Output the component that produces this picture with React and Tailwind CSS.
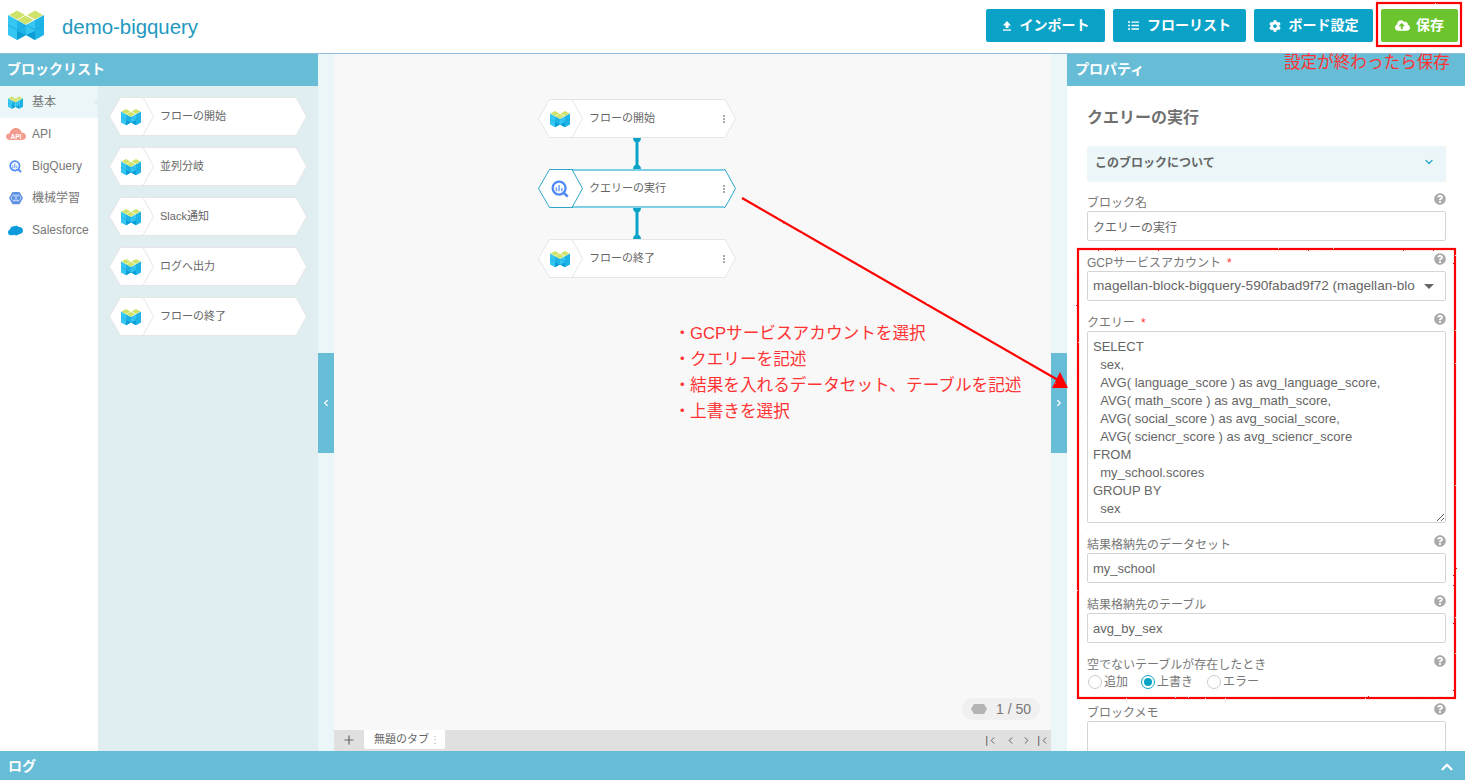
import { FaCog, FaCloudUploadAlt, FaListUl, FaQuestionCircle } from 'react-icons/fa'
import { ChevronDown, ChevronUp, ChevronLeft, ChevronRight, Plus } from 'lucide-react'

const query = `SELECT
  sex,
  AVG( language_score ) as avg_language_score,
  AVG( math_score ) as avg_math_score,
  AVG( social_score ) as avg_social_score,
  AVG( sciencr_score ) as avg_sciencr_score
FROM
  my_school.scores
GROUP BY
  sex`

function Logo({ className }) {
  return (
    <svg viewBox="0 0 36 30" className={className}>
      <polygon points="0,5 9,10 9,30 0,25" fill="#35c6f2" />
      <polygon points="9,10 18,15 18,25 9,30" fill="#1fb4e8" />
      <polygon points="18,15 27,10 27,30 18,25" fill="#35c6f2" />
      <polygon points="27,10 36,5 36,25 27,30" fill="#1fb4e8" />
      <polygon points="9,21 18,25 9,30" fill="#0a9dd6" />
      <polygon points="27,21 18,25 27,30" fill="#0a9dd6" />
      <path d="M0 15 L9 20 L18 15 M18 15 L27 20 L36 15" stroke="#16a5dc" strokeWidth="0.8" fill="none" />
      <polygon points="1,5 9,0.5 17,5 9,9.5" fill="#cfe36c" />
      <polygon points="19,5 27,0.5 35,5 27,9.5" fill="#cfe36c" />
      <polygon points="9.5,10 17.5,5.5 25.5,10 17.5,14.5" fill="#cfe36c" />
    </svg>
  )
}

function BigQueryIcon({ className }) {
  return (
    <svg viewBox="0 0 20 20" className={className} fill="none">
      <circle cx="9" cy="9" r="7.2" stroke="#4f8bf5" strokeWidth="2.6" />
      <path d="M14 14 L18.5 18.5" stroke="#4f8bf5" strokeWidth="3" />
      <path d="M6 8 V12.5 M9 5.5 V12.5 M12 9 V12.5" stroke="#7aa5f7" strokeWidth="1.8" />
    </svg>
  )
}

function ApiIcon() {
  return (
    <svg viewBox="0 0 20 14" className="h-[14px] w-[20px]">
      <path d="M4 13 C1 13 0 11 0 9.5 C0 7.5 1.5 6.5 3.5 6.5 C4 3.5 6.5 1 10 1 C13 1 15 3 15.5 5.5 C18 5.5 20 7 20 9.5 C20 11.5 18.5 13 16 13 Z" fill="#f49b90" />
      <text x="10" y="11.5" textAnchor="middle" fontSize="6.5" fontWeight="700" fill="#fff" fontFamily="Liberation Sans">API</text>
    </svg>
  )
}

function MlIcon() {
  return (
    <svg viewBox="0 0 16 16" className="h-[14px] w-[14px]" fill="none">
      <polygon points="4,1 12,1 16,8 12,15 4,15 0,8" fill="#5c8fe0" />
      <ellipse cx="8" cy="8" rx="5.5" ry="3" stroke="#cfe0fa" strokeWidth="1" />
      <path d="M5 3 L11 13 M11 3 L5 13" stroke="#cfe0fa" strokeWidth="0.8" />
    </svg>
  )
}

function SalesforceIcon() {
  return (
    <svg viewBox="0 0 16 11" className="h-[11px] w-[15px]">
      <path d="M3 10.5 C1 10.5 0 9 0 7.5 C0 6 1 5 2 4.5 C2.5 2 4.5 0.5 6.5 1 C8 0 10.5 0.3 11.5 1.8 C14 1.5 16 3.2 16 5.5 C16 8 14 9.5 12 9.3 C10.5 11 8 11 6.5 10 C5.5 10.8 4 10.8 3 10.5 Z" fill="#0e9bdc" />
    </svg>
  )
}

function Hexagon({ selected }) {
  const stroke = selected ? '#2ea6cc' : '#e6e6e6'
  return (
    <svg viewBox="0 0 198 39" className="absolute inset-0 h-[39px] w-[198px]" fill="none">
      <polygon points="0.5,19.5 11.5,0.5 187,0.5 197.5,19.5 187,38.5 11.5,38.5" fill="#fff" stroke={stroke} />
      <path d="M34 0.5 L44.5 19.5 L34 38.5" stroke={stroke} />
      {selected && <path d="M35 1 H186 M35 38 H186" stroke="#7fd0e4" strokeWidth="2" />}
    </svg>
  )
}

function Block({ label, selected, menu, icon }) {
  return (
    <div className="relative flex h-[39px] w-[198px] shrink-0 items-center">
      <Hexagon selected={selected} />
      <div className="relative flex w-[44px] justify-center">
        {icon || <Logo className="h-[18px] w-[20px]" />}
      </div>
      <span className="relative ml-[7px] flex-1 text-[11px] text-[#666]">{label}</span>
      {menu && (
        <svg viewBox="0 0 2 8" className="relative mr-[11px] h-[8px] w-[2px]" fill="#aaa">
          <rect width="2" height="2" />
          <rect y="3" width="2" height="2" />
          <rect y="6" width="2" height="2" />
        </svg>
      )}
    </div>
  )
}

function Connector() {
  return (
    <svg viewBox="0 0 10 31" className="ml-[94px] h-[31px] w-[10px] shrink-0">
      <path d="M1 0 H9 C9 3 7 4.5 5 4.5 C3 4.5 1 3 1 0 Z" fill="#0aa3c7" />
      <rect x="3.5" y="2" width="3" height="26" fill="#0aa3c7" />
      <path d="M1 31 C1 28 3 26.5 5 26.5 C7 26.5 9 28 9 31 Z" fill="#0aa3c7" />
    </svg>
  )
}

function TopButton({ className, icon, label }) {
  return (
    <button className={`flex h-[33px] items-center justify-center rounded-[2px] text-[14px] font-bold text-white ${className}`}>
      {icon}
      {label}
    </button>
  )
}

function UploadIcon() {
  return (
    <svg viewBox="0 0 10 10" className="h-[10px] w-[10px]" fill="#fff">
      <path d="M5 0 L9 4.5 H6.5 V7 H3.5 V4.5 H1 Z" />
      <rect x="1" y="8.4" width="8" height="1.3" />
    </svg>
  )
}

function Field({ label, required, className = 'mt-[10px]', children }) {
  return (
    <div className={className}>
      <div className="flex h-[20px] items-start justify-between">
        <span className="pt-[4px] text-[12px] leading-[17px] text-[#777]">
          {label}
          {required && <span className="ml-[6px] text-[#f33]">*</span>}
        </span>
        <FaQuestionCircle className="mt-[2px] text-[12px] text-[#aaa]" />
      </div>
      {children}
    </div>
  )
}

function TextInput({ value, className = 'text-[13px]' }) {
  return (
    <input
      readOnly
      value={value}
      className={`block h-[30px] w-full rounded-[2px] border border-[#d5d5d5] bg-white px-[5px] text-[#666] outline-none ${className}`}
    />
  )
}

function Radio({ label, checked, className }) {
  return (
    <div className={`flex items-center gap-[2px] ${className}`}>
      <span className={`flex h-[14px] w-[14px] items-center justify-center rounded-full border-[1.5px] ${checked ? 'border-[#0aa3c7]' : 'border-[#ccc]'}`}>
        {checked && <span className="h-[8px] w-[8px] rounded-full bg-[#0aa3c7]" />}
      </span>
      <span className="text-[12px] text-[#777]">{label}</span>
    </div>
  )
}

function ToggleStrip({ children }) {
  return (
    <div className="flex w-[16px] shrink-0 items-center bg-[#eaf6f8]">
      <div className="flex h-[100px] w-[16px] items-center justify-center bg-[#67bcd6] text-white">{children}</div>
    </div>
  )
}

const navItems = [
  { label: '基本', icon: <Logo className="h-[13px] w-[15px]" />, active: true },
  { label: 'API', icon: <ApiIcon /> },
  { label: 'BigQuery', icon: <BigQueryIcon className="h-[13px] w-[13px]" /> },
  { label: '機械学習', icon: <MlIcon /> },
  { label: 'Salesforce', icon: <SalesforceIcon /> },
]

const paletteBlocks = ['フローの開始', '並列分岐', 'Slack通知', 'ログへ出力', 'フローの終了']

const notes = ['GCPサービスアカウントを選択', 'クエリーを記述', '結果を入れるデータセット、テーブルを記述', '上書きを選択']

export default function App() {
  return (
    <div className="relative flex h-[780px] w-[1465px] flex-col overflow-hidden bg-white font-['Liberation_Sans','Noto_Sans_CJK_JP',sans-serif]">
      <header className="flex h-[54px] shrink-0 items-center justify-between border-b border-[#8fbde0] pr-[7px] pb-[2px] pl-[8px]">
        <div className="flex items-center gap-[18px]">
          <Logo className="-mt-[1px] h-[30px] w-[36px]" />
          <span className="mt-[3px] text-[20.4px] text-[#2298bf]">demo-bigquery</span>
        </div>
        <div className="flex gap-[8px]">
          <TopButton className="w-[119px] gap-[8px] bg-[#0aa3c7]" icon={<UploadIcon />} label="インポート" />
          <TopButton className="w-[133px] gap-[8px] bg-[#0aa3c7]" icon={<FaListUl className="text-[11px]" />} label="フローリスト" />
          <TopButton className="w-[119px] gap-[8px] bg-[#0aa3c7]" icon={<FaCog className="text-[12px]" />} label="ボード設定" />
          <TopButton className="w-[77px] gap-[6px] bg-[#6cc52e]" icon={<FaCloudUploadAlt className="text-[15px]" />} label="保存" />
        </div>
      </header>

      <div className="flex min-h-0 flex-1">
        <aside className="flex w-[318px] shrink-0 flex-col">
          <div className="flex h-[32px] items-center bg-[#67bcd6] pb-[2px] pl-[7px] text-[14px] font-bold text-white">ブロックリスト</div>
          <div className="flex min-h-0 flex-1">
            <nav className="w-[98px] shrink-0 bg-white">
              {navItems.map((item) => (
                <div key={item.label} className={`relative flex h-[32px] items-center ${item.active ? 'bg-[#eaf6f8]' : ''}`}>
                  <div className="flex w-[32px] justify-center pr-[1px]">{item.icon}</div>
                  <span className="text-[12px] text-[#777]">{item.label}</span>
                  {item.active && <span className="absolute right-0 h-0 w-0 border-y-[4px] border-r-[4px] border-y-transparent border-r-[#e0edf1]" />}
                </div>
              ))}
            </nav>
            <div className="flex flex-1 flex-col gap-[11px] bg-[#e0edf1] pt-[11px] pl-[11px]">
              {paletteBlocks.map((name) => (
                <Block key={name} label={name} />
              ))}
            </div>
          </div>
        </aside>

        <ToggleStrip>
          <ChevronLeft size={10} strokeWidth={3} />
        </ToggleStrip>

        <main className="relative flex w-[717px] shrink-0 flex-col bg-[#f8f8f8]">
          <div className="flex flex-1 flex-col pt-[45px] pl-[204px]">
            <Block label="フローの開始" menu />
            <Connector />
            <Block label="クエリーの実行" menu selected icon={<BigQueryIcon className="h-[18px] w-[18px]" />} />
            <Connector />
            <Block label="フローの終了" menu />
          </div>
          <div className="absolute right-[11px] bottom-[31px] flex h-[22px] w-[78px] items-center gap-[9px] rounded-full bg-[#f0f0f0] pl-[9px] text-[14px] text-[#777]">
            <svg viewBox="0 0 16 10" className="h-[10px] w-[16px]">
              <polygon points="3,0 13,0 16,5 13,10 3,10 0,5" fill="#b4b4b4" />
            </svg>
            1 / 50
          </div>
          <div className="flex h-[21px] shrink-0 items-start bg-[#e0e0e0] pr-[1px]">
            <div className="flex h-[20px] w-[30px] items-center justify-center text-[#666]">
              <Plus size={14} strokeWidth={2} />
            </div>
            <div className="flex h-[19px] w-[81px] items-center justify-between rounded-b-[2px] bg-white pr-[5px] pl-[10px] text-[11px] text-[#666]">
              無題のタブ
              <span className="text-[10px] leading-none text-[#aaa]">⋮</span>
            </div>
            <div className="ml-auto flex h-[20px] items-center text-[#555]">
              <span className="text-[11px] leading-none">|</span>
              <ChevronLeft size={11} strokeWidth={2} className="-ml-[1px]" />
              <ChevronLeft size={11} strokeWidth={2} className="ml-[7px]" />
              <ChevronRight size={11} strokeWidth={2} className="ml-[5px]" />
              <span className="ml-[5px] text-[11px] leading-none">|</span>
              <ChevronLeft size={11} strokeWidth={2} className="-ml-[1px]" />
            </div>
          </div>
        </main>

        <ToggleStrip>
          <ChevronRight size={10} strokeWidth={3} />
        </ToggleStrip>

        <section className="flex min-w-0 flex-1 flex-col">
          <div className="flex h-[32px] shrink-0 items-center bg-[#67bcd6] pb-[2px] pl-[8px] text-[14px] font-bold text-white">プロパティ</div>
          <div className="min-h-0 flex-1 overflow-hidden pt-[20px] pr-[19px] pl-[20px]">
            <h2 className="h-[24px] text-[16px] leading-[24px] font-bold text-[#707070]">クエリーの実行</h2>
            <div className="mt-[16px] flex h-[36px] items-center justify-between rounded-[2px] bg-[#eaf6f8] pr-[11px] pb-[2px] pl-[8px]">
              <span className="text-[12px] font-bold text-[#666]">このブロックについて</span>
              <ChevronDown size={12} strokeWidth={2.5} className="-mt-[2px] text-[#2ea6cc]" />
            </div>
            <Field label="ブロック名" className="mt-[9px]">
              <TextInput value="クエリーの実行" className="text-[12px]" />
            </Field>
            <Field label="GCPサービスアカウント" required>
              <div className="flex h-[30px] items-center rounded-[2px] border border-[#d5d5d5] bg-white pr-[11px] pl-[5px]">
                <span className="min-w-0 flex-1 overflow-hidden text-[13.6px] whitespace-nowrap text-[#666]">
                  magellan-block-bigquery-590fabad9f72 (magellan-block-bigquery@example)
                </span>
                <span className="ml-[9px] h-0 w-0 border-x-[5px] border-t-[5px] border-x-transparent border-t-[#666]" />
              </div>
            </Field>
            <Field label="クエリー" required>
              <textarea
                readOnly
                value={query}
                className="block h-[192px] w-full rounded-[2px] border border-[#d5d5d5] bg-white px-[5px] pt-[6px] text-[13px] leading-[18px] text-[#666] outline-none"
              />
            </Field>
            <Field label="結果格納先のデータセット">
              <TextInput value="my_school" />
            </Field>
            <Field label="結果格納先のテーブル">
              <TextInput value="avg_by_sex" />
            </Field>
            <Field label="空でないテーブルが存在したとき">
              <div className="mt-[1px] flex h-[16px] items-center pl-[1px]">
                <Radio label="追加" />
                <Radio label="上書き" checked className="ml-[13px]" />
                <Radio label="エラー" className="ml-[14px]" />
              </div>
            </Field>
            <Field label="ブロックメモ" className="mt-[11px]">
              <div className="h-[60px] rounded-[2px] border border-[#d5d5d5] bg-white" />
            </Field>
          </div>
        </section>
      </div>

      <footer className="flex h-[29px] shrink-0 items-center justify-between bg-[#67bcd6] pt-[2px] pr-[9px] pl-[8px] text-[14px] font-bold text-white">
        ログ
        <ChevronUp size={18} strokeWidth={3} />
      </footer>

      {/* red notes drawn on top of the screen */}
      <div className="absolute top-[51px] left-[1284px] text-[16.6px] whitespace-nowrap text-[#f33]">設定が終わったら保存</div>
      <ul className="absolute top-[321px] left-[674px] text-[16.65px] leading-[26px] whitespace-nowrap text-[#f33]">
        {notes.map((note) => (
          <li key={note} className="flex">
            <span className="w-[16px] text-center">・</span>
            {note}
          </li>
        ))}
      </ul>
      <svg viewBox="0 0 1465 780" className="pointer-events-none absolute inset-0 h-[780px] w-[1465px]" fill="none">
        <filter id="rough" x="-5%" y="-5%" width="110%" height="110%">
          <feTurbulence type="fractalNoise" baseFrequency="0.6" numOctaves="1" />
          <feDisplacementMap in="SourceGraphic" scale="2" />
        </filter>
        <g filter="url(#rough)" stroke="#f00" strokeWidth="2.2">
          <rect x="1377" y="3" width="84" height="43" />
          <rect x="1078" y="249" width="377" height="449" />
          <path d="M742 198 L1058 380" />
          <polygon points="1060,372 1052,388 1068,388" fill="#f00" stroke="none" />
        </g>
      </svg>
    </div>
  )
}
